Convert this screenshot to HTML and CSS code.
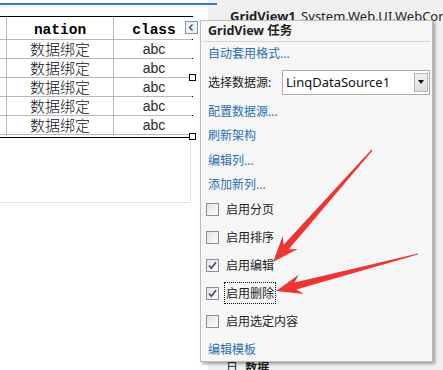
FILE: index.html
```html
<!DOCTYPE html>
<html lang="zh-CN">
<head>
<meta charset="utf-8">
<title>GridView 任务</title>
<link rel="stylesheet" href="styles.css">
</head>
<body>
<div class="ide">
  <div class="designer">
    <div class="tabline"></div>
    <div class="tabdots"></div>
    <div class="surface">
      <div class="gridframe">
        <div class="grid">
          <div class="cell"></div><div class="cell th">nation</div><div class="cell th">class</div>
          <div class="cell"></div><div class="cell cn">数据绑定</div><div class="cell abc">abc</div>
          <div class="cell"></div><div class="cell cn">数据绑定</div><div class="cell abc">abc</div>
          <div class="cell"></div><div class="cell cn">数据绑定</div><div class="cell abc">abc</div>
          <div class="cell"></div><div class="cell cn">数据绑定</div><div class="cell abc">abc</div>
          <div class="cell"></div><div class="cell cn">数据绑定</div><div class="cell abc">abc</div>
        </div>
      </div>
      <span class="handle handle-mid"></span>
      <span class="handle handle-bot"></span>
      <span class="smarttag"><svg viewBox="0 0 11 11" width="11" height="11"><path d="M6.5 2.5 L3.5 5.5 L6.5 8.5" fill="none" stroke="#333" stroke-width="1.1"/></svg></span>
    </div>
  </div>
  <div class="props">
    <div class="props-head"><b>GridView1</b> System.Web.UI.WebControls.GridView</div>
    <div class="props-foot"><span class="node">日</span> 数据</div>
  </div>
</div>

<div class="tasks">
  <div class="tasks-title">GridView 任务</div>
  <div class="tasks-sep"></div>
  <div class="row link h22">自动套用格式...</div>
  <div class="row select-row">
    <span class="select-label">选择数据源:</span>
    <span class="select"><span class="select-text">LinqDataSource1</span><span class="select-btn"><span class="tri"></span></span></span>
  </div>
  <div class="row link h22">配置数据源...</div>
  <div class="row link h25">刷新架构</div>
  <div class="row link h25">编辑列...</div>
  <div class="row link h23">添加新列...</div>
  <div class="row cb-row"><span class="cb"></span><span class="cb-label">启用分页</span></div>
  <div class="row cb-row"><span class="cb"></span><span class="cb-label">启用排序</span></div>
  <div class="row cb-row"><span class="cb checked"><svg viewBox="0 0 11 11" width="11" height="11"><path d="M2 5.5 L4.3 8.2 L9 2.2" fill="none" stroke="#3d5588" stroke-width="1.8"/></svg></span><span class="cb-label">启用编辑</span></div>
  <div class="row cb-row"><span class="cb checked"><svg viewBox="0 0 11 11" width="11" height="11"><path d="M2 5.5 L4.3 8.2 L9 2.2" fill="none" stroke="#3d5588" stroke-width="1.8"/></svg></span><span class="cb-label focus">启用删除</span></div>
  <div class="row cb-row"><span class="cb"></span><span class="cb-label">启用选定内容</span></div>
  <div class="row link h27">编辑模板</div>
</div>

<svg class="arrows" width="443" height="370" viewBox="0 0 443 370">
  <polygon fill="#ee3535" points="273,262 297.7,249.1 288.8,249.3 372.5,150.4 371.5,149.6 283.6,244.7 282.7,235.9"/>
  <polygon fill="#ee3535" points="276,291 303.7,294.1 296.3,289.4 418,254.6 418,253.6 294.5,282.6 298.7,274.7"/>
</svg>
</body>
</html>
```
FILE: styles.css
```css
html, body {
  margin: 0;
  padding: 0;
}
body {
  width: 443px;
  height: 370px;
  overflow: hidden;
  position: relative;
  background: #ffffff;
  font-family: "Noto Sans", "Noto Sans CJK SC", sans-serif;
  color: #1a1a1a;
}

.ide {
  display: flex;
  height: 370px;
}

/* ---------- designer ---------- */
.designer {
  width: 208px;
  flex: none;
  background: #ffffff;
}
.tabline {
  margin-top: 3px;
  height: 2px;
  width: 217px;
  background: #2a7fd0;
  position: relative;
  z-index: 1;
}
.tabdots {
  margin-top: 1px;
  height: 1px;
  border-top: 1px dotted #eadcd6;
}
.surface {
  position: relative;
  margin-top: 8px;
  width: 190px;
  height: 186px;
  border-right: 1px dotted #cfcfcf;
  border-bottom: 1px dotted #cfcfcf;
}
.gridframe {
  width: 192px;
  border-top: 1px solid #000;
  border-right: 1px solid #000;
  border-bottom: 1px solid #000;
  background: #fff;
  padding-bottom: 2px;
}
.grid {
  display: grid;
  grid-template-columns: 6px 106px 80px;
  grid-template-rows: 22px repeat(5, 18px);
  gap: 1px;
  background: #b8b8b8;
  border-bottom: 1px solid #b8b8b8;
}
.cell {
  background: #fff;
  display: flex;
  align-items: center;
  justify-content: center;
  white-space: nowrap;
  line-height: 16px;
}
.th {
  font-family: "Liberation Mono", monospace;
  font-weight: bold;
  font-size: 14.5px;
  padding-top: 4px;
  color: #000;
}
.cn {
  font-family: "Noto Sans CJK SC", sans-serif;
  font-size: 15px;
  font-weight: 300;
  color: #111;
}
.abc {
  font-family: "Liberation Sans", sans-serif;
  font-size: 14px;
  color: #2a2a2a;
}
.handle {
  position: absolute;
  width: 5px;
  height: 5px;
  border: 1px solid #000;
  background: #fff;
  left: 189px;
}
.handle-mid { top: 58px; }
.handle-bot { top: 117px; }
.smarttag {
  position: absolute;
  left: 185px;
  top: 5px;
  width: 13px;
  height: 13px;
  box-sizing: border-box;
  border: 1px solid #7a94b4;
  background: #eef2f8;
  display: flex;
  align-items: center;
  justify-content: center;
}
.smarttag svg { display: block; }

/* ---------- properties pane ---------- */
.props {
  flex: 1;
  background: #f0f0f0;
  display: flex;
  flex-direction: column;
  overflow: hidden;
}
.props-head {
  margin-top: 7px;
  padding-left: 22px;
  font-size: 13px;
  line-height: 18px;
  white-space: nowrap;
  color: #222;
}
.props-head b {
  font-weight: 700;
  margin-right: 2px;
}
.props-foot {
  margin-top: auto;
  margin-bottom: -6px;
  padding-left: 18px;
  font-size: 12px;
  font-weight: 700;
  line-height: 16px;
  white-space: nowrap;
}
.node {
  font-weight: 400;
  margin-right: 4px;
}

/* ---------- task panel ---------- */
.tasks {
  position: absolute;
  left: 200px;
  top: 20px;
  width: 233px;
  height: 342px;
  box-sizing: border-box;
  background: #f6f6f6;
  border: 1px solid #bcbcbc;
  box-shadow: 2px 2px 3px rgba(0, 0, 0, 0.35);
  font-size: 12px;
}
.tasks-title {
  height: 20px;
  line-height: 20px;
  padding-left: 7px;
  font-weight: 700;
  font-size: 12.5px;
  color: #1e1e1e;
}
.tasks-sep {
  height: 1px;
  margin: 0 2px;
  background: #d6d6d6;
}
.row {
  display: flex;
  align-items: center;
  padding-left: 7px;
  white-space: nowrap;
}
.link {
  color: #2d6db5;
}
.h22 { height: 22px; }
.h23 { height: 23px; }
.h25 { height: 25px; }
.h27 { height: 27px; }

.select-row {
  height: 36px;
}
.select-label {
  width: 74px;
  flex: none;
}
.select {
  width: 148px;
  height: 25px;
  box-sizing: border-box;
  border: 1px solid #ababab;
  background: #fff;
  display: flex;
  align-items: center;
  justify-content: space-between;
  padding: 0 1px 0 3px;
}
.select-text {
  font-size: 13px;
  color: #111;
}
.select-btn {
  width: 14px;
  height: 19px;
  box-sizing: border-box;
  border: 1px solid #b4b4b4;
  background: linear-gradient(#f2f2f2, #dedede);
  display: flex;
  align-items: center;
  justify-content: center;
}
.tri {
  width: 0;
  height: 0;
  border-left: 3.5px solid transparent;
  border-right: 3.5px solid transparent;
  border-top: 4px solid #111;
}

.cb-row {
  height: 28px;
  padding-left: 5px;
}
.cb {
  width: 13px;
  height: 13px;
  box-sizing: border-box;
  border: 1px solid #8f8f8f;
  background: linear-gradient(135deg, #e4e4e4, #fbfbfb);
  margin-right: 5px;
  display: flex;
  align-items: center;
  justify-content: center;
}
.cb svg { display: block; }
.cb-label {
  color: #1e1e1e;
  padding: 1px 1px;
  border: 1px solid transparent;
}
.cb-label.focus {
  border: 1px dotted #111;
}

/* ---------- annotation arrows ---------- */
.arrows {
  position: absolute;
  left: 0;
  top: 0;
  pointer-events: none;
}
```
